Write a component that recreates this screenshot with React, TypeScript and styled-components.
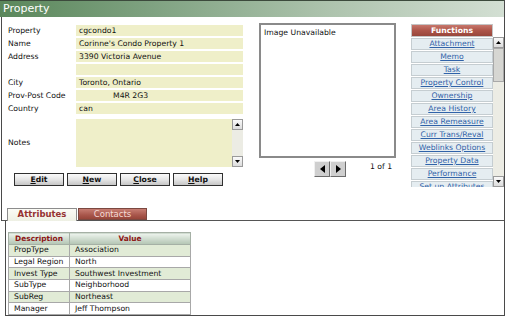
import React from "react";
import styled, { createGlobalStyle } from "styled-components";

const Global = createGlobalStyle`
  html, body { margin: 0; padding: 0; background: #fff; }
  body { font-family: "DejaVu Sans", Verdana, sans-serif; font-size: 7.7px; color: #111; }
  #root { width: 506px; height: 316px; }
`;

const Page = styled.div`
  width: 505px;
  height: 316px;
  box-sizing: border-box;
  border-right: 1px solid #4a4a4a;
  display: flex;
  flex-direction: column;
  overflow: hidden;
`;

const TitleBar = styled.div`
  height: 17px;
  flex: none;
  box-sizing: border-box;
  border-top: 1px solid #3c4a3c;
  background: linear-gradient(to right, #5a875b 0%, #7fa281 30%, #adc3ad 65%, #d3dfd3 100%);
  color: #fff;
  font-size: 11px;
  line-height: 15px;
  padding-left: 3px;
`;

const Upper = styled.div`
  flex: none;
  margin-left: 1px;
  border-left: 1px solid #4a4a4a;
  display: flex;
  flex-direction: column;
`;

const Main = styled.div`
  height: 191px;
  display: flex;
  align-items: flex-start;
`;

const FormCol = styled.div`
  width: 241px;
  padding: 8px 0 0 6px;
  box-sizing: border-box;
  display: flex;
  flex-direction: column;
`;

const FormGrid = styled.div`
  display: grid;
  grid-template-columns: 68px 167px;
  grid-auto-rows: 11px;
  row-gap: 2px;
  align-items: center;
`;

const Label = styled.div`
  line-height: 11px;
  white-space: nowrap;
`;

const Field = styled.div<{ $indent?: number }>`
  height: 11px;
  box-sizing: border-box;
  background: #efefc9;
  padding-left: ${(p) => p.$indent ?? 3}px;
  line-height: 11px;
  white-space: nowrap;
`;

const NotesLabel = styled(Label)`
  margin-top: 3px;
  height: 48px;
  line-height: 48px;
`;

const NotesArea = styled.div`
  margin-top: 3px;
  height: 48px;
  background: #efefc9;
  display: flex;
  justify-content: flex-end;
`;

const NotesRow = styled.div`
  display: grid;
  grid-template-columns: 68px 167px;
  margin-top: 2px;
`;

const VScroll = styled.div<{ $w: number }>`
  width: ${(p) => p.$w}px;
  height: 100%;
  box-sizing: border-box;
  background: #ecece4;
  display: flex;
  flex-direction: column;
  justify-content: space-between;
`;

const ScrollArrow = styled.div`
  width: 100%;
  height: 11px;
  box-sizing: border-box;
  background: linear-gradient(#fafafa, #dcdcdc);
  border: 1px solid #9a9a9a;
  display: flex;
  align-items: center;
  justify-content: center;
`;

const Thumb = styled.div`
  width: 100%;
  height: 34px;
  box-sizing: border-box;
  background: #d6d6d2;
  border: 1px solid #a8a8a8;
`;

const ScrollFill = styled.div`
  flex: 1;
  display: flex;
  flex-direction: column;
`;

const ButtonRow = styled.div`
  display: flex;
  gap: 3px;
  margin: 6px 0 0 6px;
`;

const Button = styled.div`
  width: 50px;
  height: 13px;
  box-sizing: border-box;
  border: 1px solid #303030;
  background: linear-gradient(#fbfbfb 0%, #e6e6e6 50%, #c6c6c6 100%);
  font-weight: bold;
  text-align: center;
  line-height: 11px;
  color: #111;
  u { text-decoration: underline; }
`;

const ImageCol = styled.div`
  margin-left: 16px;
  padding-top: 6px;
  display: flex;
  flex-direction: column;
`;

const ImageBox = styled.div`
  width: 137px;
  height: 135px;
  box-sizing: border-box;
  border: 2px solid #8a8a8a;
  background: #fff;
  padding: 2px 3px;
  line-height: 11px;
`;

const NavRow = styled.div`
  display: flex;
  align-items: center;
  margin-top: 3px;
  padding-left: 55px;
`;

const NavButton = styled.div`
  width: 16px;
  height: 16px;
  box-sizing: border-box;
  background: #cfcfcf;
  border: 1px solid;
  border-color: #f0f0f0 #6c6c6c #6c6c6c #f0f0f0;
  display: flex;
  align-items: center;
  justify-content: center;
`;

const PageCount = styled.div`
  margin-left: 24px;
  margin-top: -6px;
`;

const FuncCol = styled.div`
  margin-left: 15px;
  padding-top: 7px;
  display: flex;
  flex-direction: column;
`;

const FuncHeader = styled.div`
  width: 82px;
  height: 13px;
  box-sizing: border-box;
  border: 1px solid #c4c4c4;
  background: linear-gradient(#c7776c 0%, #ad5549 50%, #98463b 100%);
  color: #fff;
  font-weight: bold;
  text-align: center;
  line-height: 11px;
`;

const FuncBody = styled.div`
  display: flex;
  height: 150px;
`;

const FuncList = styled.div`
  width: 82px;
  height: 150px;
  overflow: hidden;
  display: flex;
  flex-direction: column;
  gap: 1px;
  padding-top: 1px;
  box-sizing: border-box;
`;

const FuncItem = styled.a`
  flex: none;
  height: 12px;
  box-sizing: border-box;
  border: 1px solid #c5cdd1;
  background: #e5edf1;
  color: #3062a8;
  text-decoration: underline;
  text-align: center;
  line-height: 10px;
  white-space: nowrap;
  overflow: hidden;
`;

const TabStrip = styled.div`
  height: 13px;
  box-sizing: border-box;
  border-bottom: 1px solid #555;
  display: flex;
  align-items: flex-start;
  gap: 1px;
  padding-left: 5px;
`;

const Tab = styled.div<{ $active?: boolean }>`
  height: ${(p) => (p.$active ? 13 : 12)}px;
  width: ${(p) => (p.$active ? 70 : 69)}px;
  box-sizing: border-box;
  border: 1px solid ${(p) => (p.$active ? "#8c8c8c" : "#7b4840")};
  border-bottom: ${(p) => (p.$active ? "none" : "1px solid #7b4840")};
  background: ${(p) =>
    p.$active
      ? "linear-gradient(#fbfbf6, #eef0e4)"
      : "linear-gradient(#c77d72 0%, #a8564b 60%, #964539 100%)"};
  color: ${(p) => (p.$active ? "#963232" : "#f6dcd6")};
  font-weight: ${(p) => (p.$active ? "bold" : "normal")};
  font-size: 8.5px;
  text-align: center;
  line-height: 11px;
  position: relative;
  z-index: 1;
`;

const Lower = styled.div`
  flex: 1;
  margin-left: 5px;
  border-left: 1px solid #4a4a4a;
  border-bottom: 1px solid #4a4a4a;
  padding: 11px 0 0 2px;
`;

const AttrTable = styled.table`
  border-collapse: collapse;
  width: 180px;
  table-layout: fixed;
`;

const HeadCell = styled.th<{ $w: number }>`
  width: ${(p) => p.$w}px;
  height: 11px;
  padding: 0;
  border: 1px solid #a5b0a5;
  background: linear-gradient(#eef4ee 0%, #cfdccf 50%, #b3c4b3 100%);
  color: #8c1414;
  font-weight: bold;
  font-size: 7.4px;
  text-align: center;
  line-height: 10px;
`;

const Cell = styled.td<{ $alt: boolean }>`
  height: 10.7px;
  padding: 0 0 0 5px;
  border: 1px solid #a8a8a8;
  background: ${(p) => (p.$alt ? "#e1ebd6" : "#ffffff")};
  line-height: 10px;
  white-space: nowrap;
  overflow: hidden;
`;

const Up = () => (
  <svg width="5" height="3" viewBox="0 0 5 3"><path d="M2.5 0 L5 3 L0 3 Z" fill="#000" /></svg>
);
const Down = () => (
  <svg width="5" height="3" viewBox="0 0 5 3"><path d="M0 0 L5 0 L2.5 3 Z" fill="#000" /></svg>
);
const Left = () => (
  <svg width="5" height="8" viewBox="0 0 5 8"><path d="M5 0 L5 8 L0 4 Z" fill="#000" /></svg>
);
const Right = () => (
  <svg width="5" height="8" viewBox="0 0 5 8"><path d="M0 0 L5 4 L0 8 Z" fill="#000" /></svg>
);

const fields: [string, string, number?][] = [
  ["Property", "cgcondo1"],
  ["Name", "Corinne's Condo Property 1"],
  ["Address", "3390 Victoria Avenue"],
  ["", ""],
  ["City", "Toronto, Ontario"],
  ["Prov-Post Code", "M4R 2G3", 37],
  ["Country", "can"],
];

const functions = [
  "Attachment",
  "Memo",
  "Task",
  "Property Control",
  "Ownership",
  "Area History",
  "Area Remeasure",
  "Curr Trans/Reval",
  "Weblinks Options",
  "Property Data",
  "Performance",
  "Set up Attributes",
];

const attributes: [string, string][] = [
  ["PropType", "Association"],
  ["Legal Region", "North"],
  ["Invest Type", "Southwest Investment"],
  ["SubType", "Neighborhood"],
  ["SubReg", "Northeast"],
  ["Manager", "Jeff Thompson"],
];

const buttons = [
  ["E", "dit"],
  ["N", "ew"],
  ["C", "lose"],
  ["H", "elp"],
];

export default function App() {
  return (
    <>
      <Global />
      <Page>
        <TitleBar>Property</TitleBar>
        <Upper>
          <Main>
            <FormCol>
              <FormGrid>
                {fields.map(([l, v, ind], i) => (
                  <React.Fragment key={i}>
                    <Label>{l}</Label>
                    <Field $indent={ind}>{v}</Field>
                  </React.Fragment>
                ))}
              </FormGrid>
              <NotesRow>
                <NotesLabel>Notes</NotesLabel>
                <NotesArea>
                  <VScroll $w={11}>
                    <ScrollArrow><Up /></ScrollArrow>
                    <ScrollArrow><Down /></ScrollArrow>
                  </VScroll>
                </NotesArea>
              </NotesRow>
              <ButtonRow>
                {buttons.map(([a, b]) => (
                  <Button key={a}>
                    <u>{a}</u>
                    {b}
                  </Button>
                ))}
              </ButtonRow>
            </FormCol>
            <ImageCol>
              <ImageBox>Image Unavailable</ImageBox>
              <NavRow>
                <NavButton><Left /></NavButton>
                <NavButton><Right /></NavButton>
                <PageCount>1 of 1</PageCount>
              </NavRow>
            </ImageCol>
            <FuncCol>
              <FuncHeader>Functions</FuncHeader>
              <FuncBody>
                <FuncList>
                  {functions.map((f) => (
                    <FuncItem key={f}>{f}</FuncItem>
                  ))}
                </FuncList>
                <VScroll $w={11}>
                  <ScrollFill>
                    <ScrollArrow><Up /></ScrollArrow>
                    <Thumb />
                  </ScrollFill>
                  <ScrollArrow><Down /></ScrollArrow>
                </VScroll>
              </FuncBody>
            </FuncCol>
          </Main>
          <TabStrip>
            <Tab $active>Attributes</Tab>
            <Tab>Contacts</Tab>
          </TabStrip>
        </Upper>
        <Lower>
          <AttrTable>
            <thead>
              <tr>
                <HeadCell $w={60}>Description</HeadCell>
                <HeadCell $w={120}>Value</HeadCell>
              </tr>
            </thead>
            <tbody>
              {attributes.map(([d, v], i) => (
                <tr key={d}>
                  <Cell $alt={i % 2 === 0}>{d}</Cell>
                  <Cell $alt={i % 2 === 0}>{v}</Cell>
                </tr>
              ))}
            </tbody>
          </AttrTable>
        </Lower>
      </Page>
    </>
  );
}
